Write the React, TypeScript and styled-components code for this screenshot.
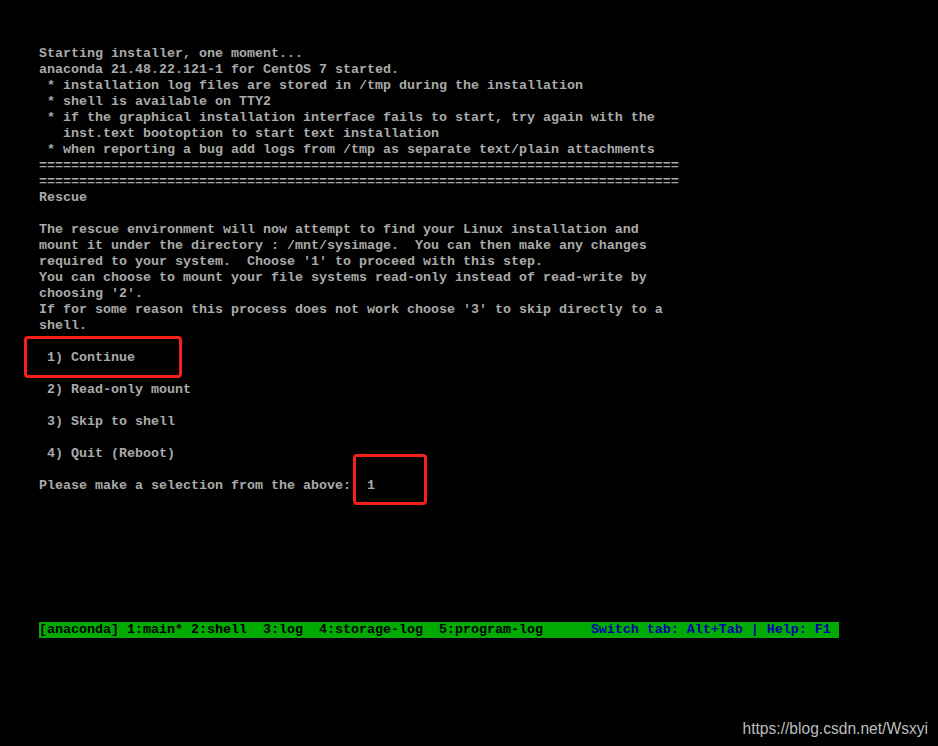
import React from "react";
import styled, { createGlobalStyle } from "styled-components";

const Global = createGlobalStyle`
  html, body { margin: 0; padding: 0; background: #000; }
  #root { width: 938px; height: 746px; }
`;

const Screen = styled.div`
  position: relative;
  width: 938px;
  height: 746px;
  background: #000;
  box-sizing: border-box;
  padding: 46px 0 0 39px;
  overflow: hidden;
`;

const Console = styled.div`
  display: flex;
  flex-direction: column;
  font-family: "Liberation Mono", "DejaVu Sans Mono", monospace;
  font-size: 13.333px;
  font-weight: bold;
  line-height: 16px;
  color: #aaaaaa;
`;

const Line = styled.div`
  height: 16px;
  white-space: pre;
`;

const StatusBar = styled.div`
  display: flex;
  width: 800px;
  height: 16px;
  background: #00aa00;
  white-space: pre;
  color: #000;
`;

const StatusText = styled.span<{ $tone?: "blue" | "black" }>`
  color: ${(p) => (p.$tone === "blue" ? "#0000aa" : "#000")};
`;

const Mark = styled.div<{ $x: number; $y: number; $w: number; $h: number }>`
  position: absolute;
  left: ${(p) => p.$x}px;
  top: ${(p) => p.$y}px;
  width: ${(p) => p.$w}px;
  height: ${(p) => p.$h}px;
  box-sizing: border-box;
  border: 3px solid #f5201a;
  border-radius: 4px;
`;

const Watermark = styled.div`
  position: absolute;
  right: 10px;
  bottom: 8px;
  font-family: "Liberation Sans", Arial, sans-serif;
  font-size: 15.6px;
  line-height: 18px;
  color: #bdbdbd;
`;

const lines: string[] = [
  "Starting installer, one moment...",
  "anaconda 21.48.22.121-1 for CentOS 7 started.",
  " * installation log files are stored in /tmp during the installation",
  " * shell is available on TTY2",
  " * if the graphical installation interface fails to start, try again with the",
  "   inst.text bootoption to start text installation",
  " * when reporting a bug add logs from /tmp as separate text/plain attachments",
  "=".repeat(80),
  "=".repeat(80),
  "Rescue",
  "",
  "The rescue environment will now attempt to find your Linux installation and",
  "mount it under the directory : /mnt/sysimage.  You can then make any changes",
  "required to your system.  Choose '1' to proceed with this step.",
  "You can choose to mount your file systems read-only instead of read-write by",
  "choosing '2'.",
  "If for some reason this process does not work choose '3' to skip directly to a",
  "shell.",
  "",
  " 1) Continue",
  "",
  " 2) Read-only mount",
  "",
  " 3) Skip to shell",
  "",
  " 4) Quit (Reboot)",
  "",
  "Please make a selection from the above:  1",
  "",
  "",
  "",
  "",
  "",
  "",
  "",
  "",
];

export default function App() {
  return (
    <>
      <Global />
      <Screen>
        <Console>
          {lines.map((l, i) => (
            <Line key={i}>{l}</Line>
          ))}
          <StatusBar>
            <StatusText>
              {"[anaconda] 1:main* 2:shell  3:log  4:storage-log  5:program-log      "}
            </StatusText>
            <StatusText $tone="blue">{"Switch tab: Alt+Tab | Help: F1"}</StatusText>
          </StatusBar>
        </Console>
        <Mark $x={24} $y={336} $w={158} $h={42} />
        <Mark $x={353} $y={454} $w={74} $h={51} />
        <Watermark>https://blog.csdn.net/Wsxyi</Watermark>
      </Screen>
    </>
  );
}
